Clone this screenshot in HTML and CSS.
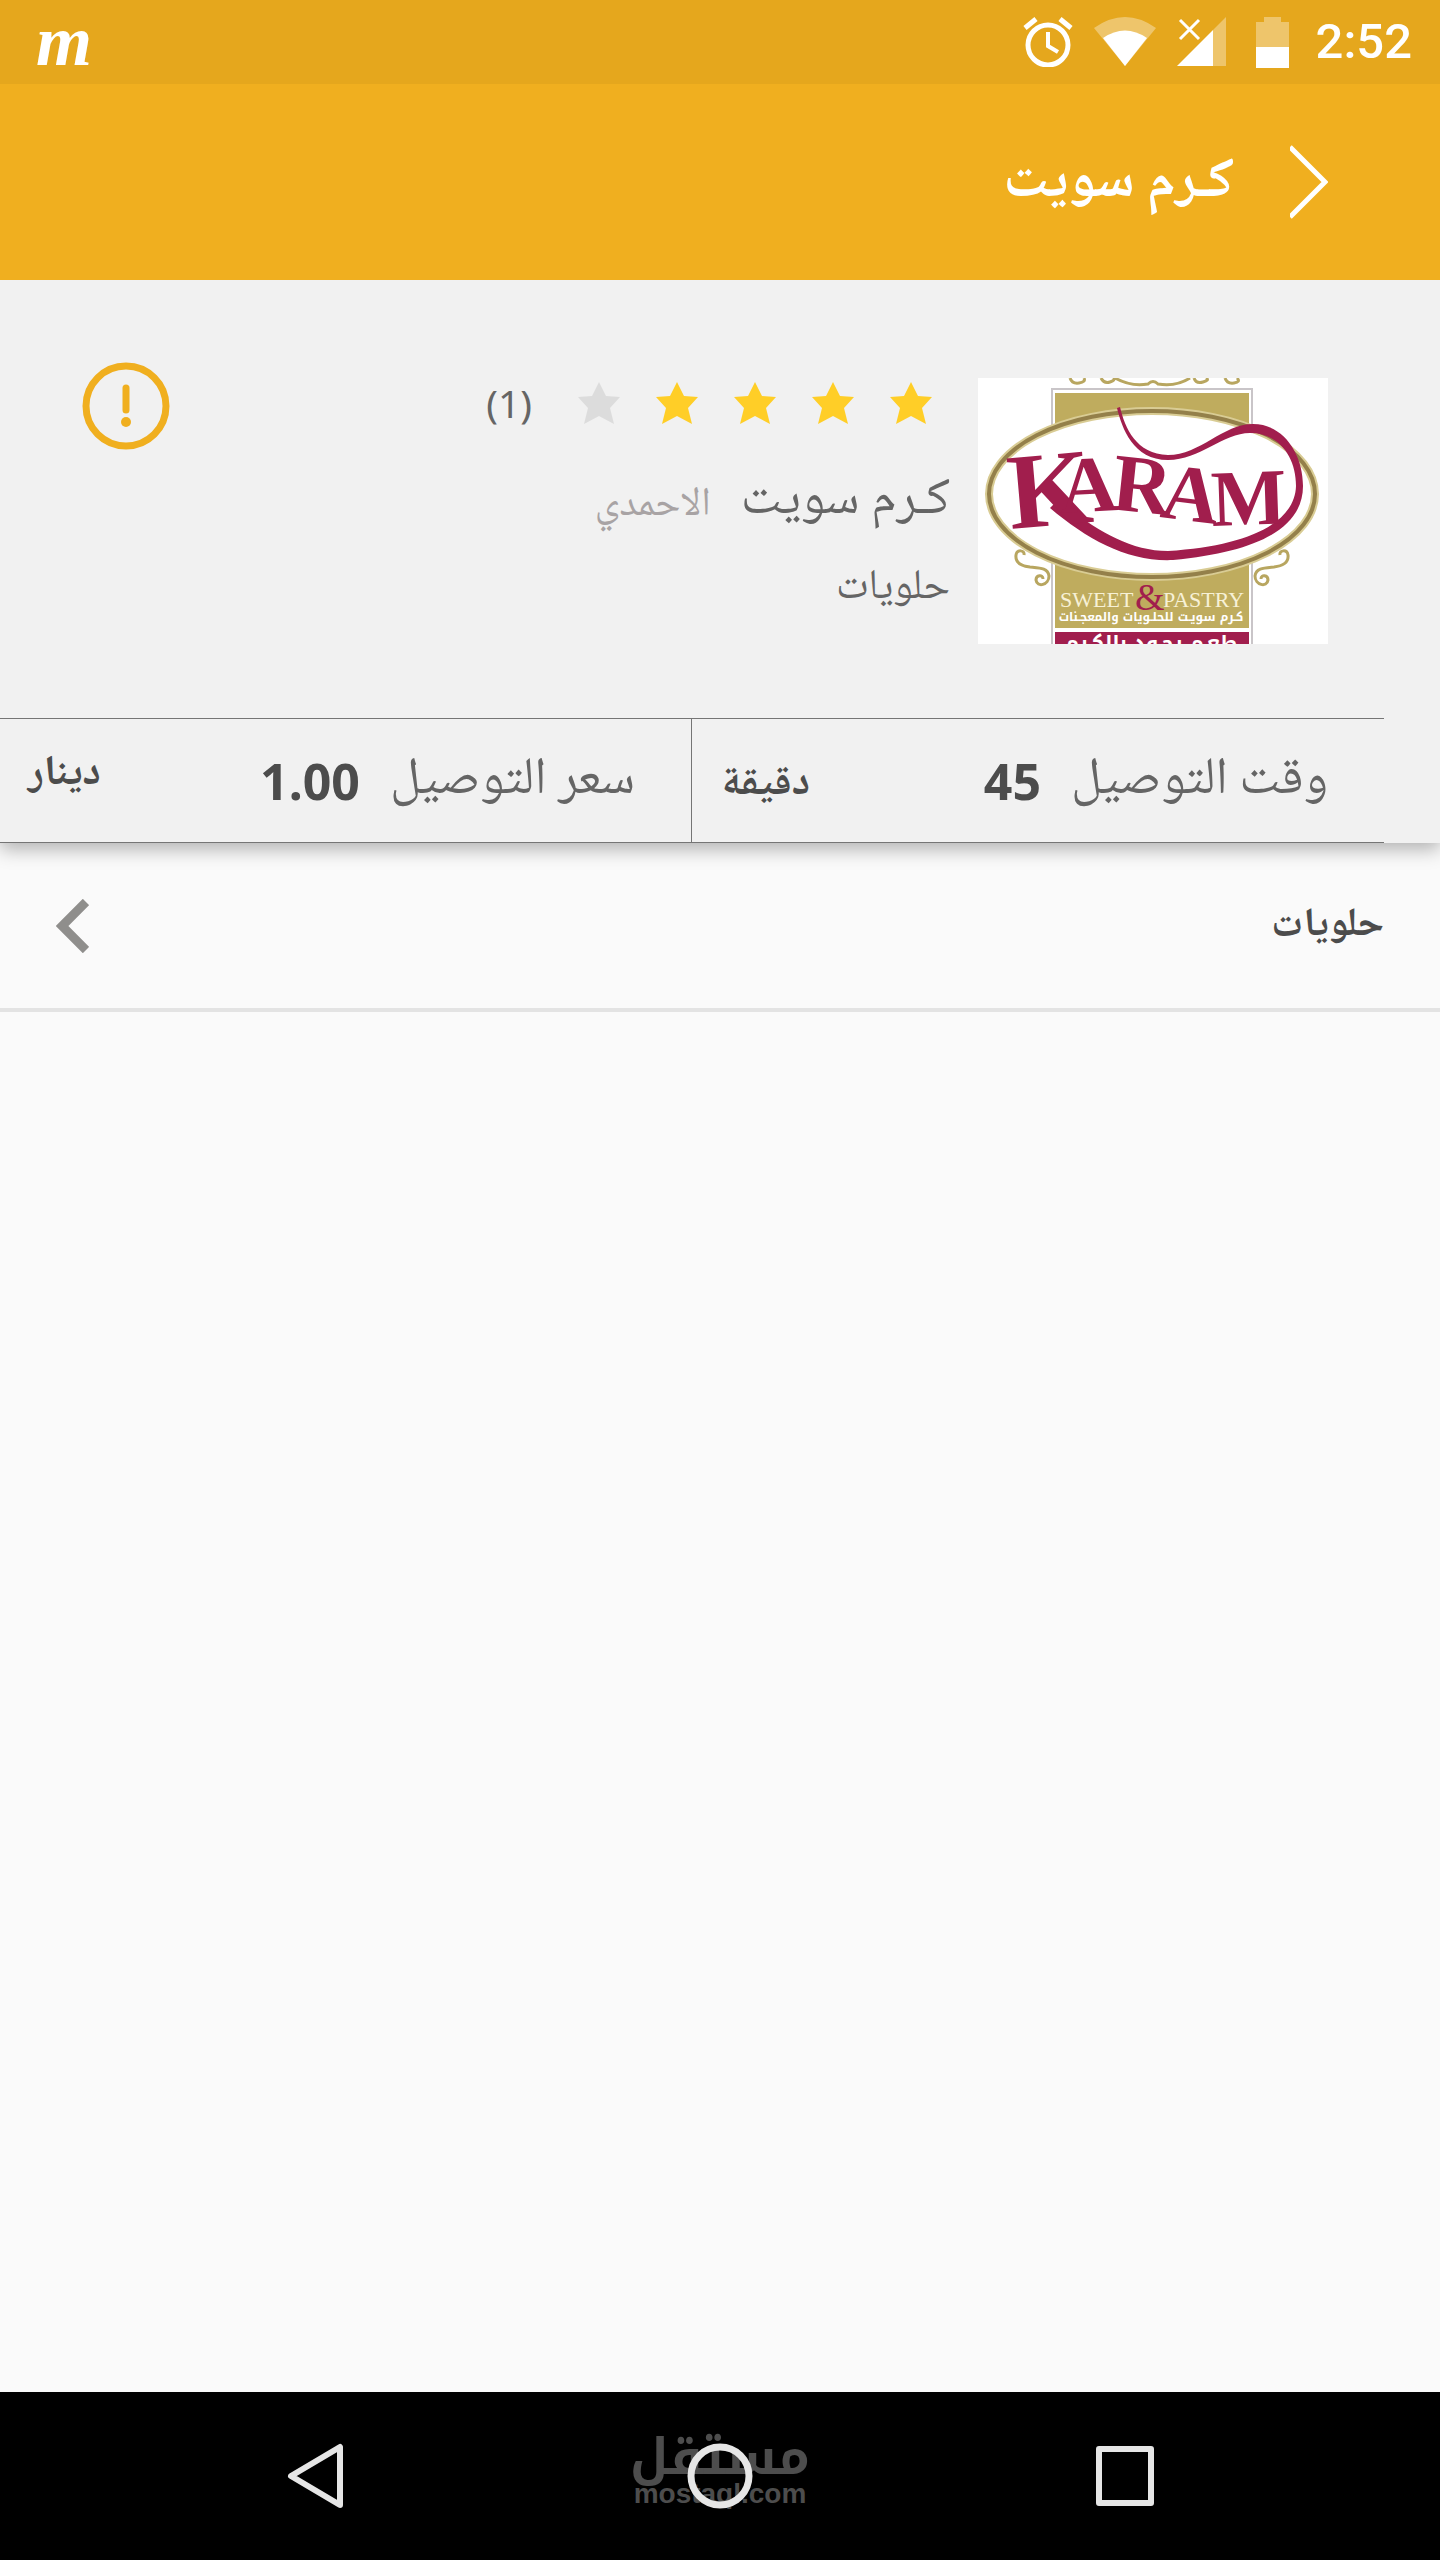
FILE: index.html
```html
<!DOCTYPE html>
<html lang="ar" dir="rtl">
<head>
<meta charset="utf-8">
<meta name="viewport" content="width=device-width, initial-scale=1">
<title>كـرم سويت</title>
<link rel="stylesheet" href="styles.css">
</head>
<body>
<div class="app">
  <div class="statusbar" dir="ltr">
    <span class="statusbar-app">m</span>
    <div class="statusbar-icons">
      <svg width="50" height="50" viewBox="0 0 50 50" fill="none" stroke="#fff" stroke-width="5" aria-label="Alarm">
        <circle cx="25" cy="28" r="20"/>
        <path d="M25 15v14l10 6" stroke-width="4"/>
        <path d="M2 11 13 2M48 11 37 2"/>
      </svg>
      <svg width="62" height="50" viewBox="0 0 62 50" fill="#fff" aria-label="Wi-Fi">
        <path d="M0 11Q31-11 62 11L31 49z" opacity=".35"/>
        <path d="M9 21Q31 6 53 21L31 49z"/>
      </svg>
      <svg width="50" height="50" viewBox="0 0 50 50" fill="#fff" aria-label="Mobile signal">
        <path d="M49 0v49H36V13z" opacity=".35"/>
        <path d="M36 13v36H0z"/>
        <path d="M3 3 22 22M22 3 3 22" fill="none" stroke="#fff" stroke-width="3"/>
      </svg>
      <svg class="battery" width="33" height="51" viewBox="0 0 33 51" fill="#fff" aria-label="Battery">
        <path d="M8 0h17v5h8v25H0V5h8z" opacity=".35"/>
        <path d="M0 30h33v21H0z"/>
      </svg>
      <time class="clock">2:52</time>
    </div>
  </div>

  <header class="appbar">
    <button class="icon-button" type="button" aria-label="رجوع">
      <svg width="38" height="74" viewBox="0 0 38 74" fill="none" stroke="#fff" stroke-width="5">
        <path d="M0 2 35 37 0 72"/>
      </svg>
    </button>
    <h1 class="appbar-title">كـرم سويت</h1>
  </header>

  <main class="content">
    <section class="card">
      <div class="shop">
        <svg class="shop-logo" width="350" height="266" viewBox="0 0 350 266" direction="ltr" aria-label="Karam Sweet &amp; Pastry">
          <rect width="350" height="266" fill="#fff"/>
          <g fill="none" stroke="#b8a660" stroke-width="3">
            <path d="M92 0q2 6 9 5t5-5M123 0q3 6 9 4t3-4M137 0q16 9 33 6 5-5 10 0 18 3 32-6M216 0q2 6 9 4t3-4M247 0q2 6 9 5t3-5"/>
            <path d="M46 177c1-5-7-6-8 0-1 8 6 11 14 12 10 1 18 1 19 9 0 9-12 12-13 4 0-5 7-6 7-1"/>
            <path d="M302 177c-1-5 7-6 8 0 1 8-6 11-14 12-10 1-18 1-19 9 0 9 12 12 13 4 0-5-7-6-7-1"/>
          </g>
          <path d="M74 266V11h200v255" fill="#fff" stroke="#c9c5c8" stroke-width="2"/>
          <rect x="77" y="15" width="194" height="235" fill="#bfac5e"/>
          <rect x="77" y="254" width="194" height="12" fill="#a11e4d"/>
          <ellipse cx="174" cy="116" rx="163" ry="83" fill="#fff" stroke="#d9cc94" stroke-width="8"/>
          <ellipse cx="174" cy="116" rx="163" ry="83" fill="none" stroke="#94804a" stroke-width="4"/>
          <path d="M139 30C144 50 155 82 190 82 222 82 245 55 272 55 300 55 318 78 318 108 317 145 270 168 190 173 150 173 115 150 80 122L72 130C110 162 150 184 195 182 280 174 325 150 325 108 325 75 305 46 275 46 245 46 222 77 190 77 158 76 147 50 142 29z" fill="#a11e4d"/>
          <g class="logo-name">
            <text x="33" y="151" font-size="108" transform="rotate(-5 33 151)">K</text>
            <text x="83" y="135" font-size="80" transform="rotate(-3 83 135)">A</text>
            <text x="132" y="131" font-size="82" transform="rotate(6 132 131)">R</text>
            <text x="181" y="139" font-size="80" transform="rotate(7 181 139)">A</text>
            <text x="234" y="148" font-size="80" transform="rotate(-2 234 148)">M</text>
          </g>
          <g class="logo-tag">
            <text x="82" y="229" font-size="22">SWEET</text>
            <text x="185" y="229" font-size="22">PASTRY</text>
          </g>
          <text class="logo-amp" x="157" y="232" font-size="38">&amp;</text>
          <text class="logo-arabic" x="173" y="243" font-size="12">كـرم سويـت للحلـويات والمعجـنات</text>
          <text class="logo-arabic" x="173" y="272" font-size="20">طعـم يجـود بالكـرم</text>
        </svg>

        <div class="shop-info">
          <div class="rating">
            <svg class="star" viewBox="0 0 42 42"><path d="M21 0l7 14 14 1-10 11 4 16-15-8-15 8 4-16L0 15l14-1z"/></svg>
            <svg class="star" viewBox="0 0 42 42"><path d="M21 0l7 14 14 1-10 11 4 16-15-8-15 8 4-16L0 15l14-1z"/></svg>
            <svg class="star" viewBox="0 0 42 42"><path d="M21 0l7 14 14 1-10 11 4 16-15-8-15 8 4-16L0 15l14-1z"/></svg>
            <svg class="star" viewBox="0 0 42 42"><path d="M21 0l7 14 14 1-10 11 4 16-15-8-15 8 4-16L0 15l14-1z"/></svg>
            <svg class="star star-off" viewBox="0 0 42 42"><path d="M21 0l7 14 14 1-10 11 4 16-15-8-15 8 4-16L0 15l14-1z"/></svg>
            <span class="rating-count">(1)</span>
          </div>
          <div class="shop-title">
            <h2 class="shop-name">كـرم سويت</h2>
            <span class="shop-area">الاحمدي</span>
          </div>
          <p class="shop-kind">حلويات</p>
        </div>

        <button class="icon-button info-button" type="button" aria-label="معلومات">
          <svg width="88" height="88" viewBox="0 0 88 88" fill="none" stroke="#f0af1f" stroke-width="7">
            <circle cx="44" cy="44" r="40"/>
            <path d="M44 26v22" stroke-linecap="round"/>
            <circle cx="44" cy="60" r="5" fill="#f0af1f" stroke="none"/>
          </svg>
        </button>
      </div>

      <div class="delivery">
        <div class="fact">
          <span class="fact-label">وقت التوصيل</span>
          <span class="fact-value">45</span>
          <span class="fact-unit">دقيقة</span>
        </div>
        <div class="fact">
          <span class="fact-label">سعر التوصيل</span>
          <span class="fact-value">1.00</span>
          <span class="fact-unit fact-unit-raised">دينار</span>
        </div>
      </div>
    </section>

    <nav class="menu">
      <a class="menu-item" href="#sweets">
        <span>حلويات</span>
        <svg width="33" height="54" viewBox="0 0 33 54" fill="none" stroke="#8f8e8c" stroke-width="9">
          <path d="M30 3 6 27 30 51"/>
        </svg>
      </a>
    </nav>
  </main>

  <div class="navbar" dir="ltr">
    <div class="watermark">
      <span class="watermark-name" lang="ar">مستقل</span>
      <span class="watermark-site">mostaql.com</span>
    </div>
    <button class="icon-button" type="button" aria-label="Back">
      <svg width="58" height="66" viewBox="0 0 58 66" fill="none" stroke="#e6e6e6" stroke-width="6" stroke-linejoin="round">
        <path d="M54 4v58L5 33z"/>
      </svg>
    </button>
    <button class="icon-button" type="button" aria-label="Home">
      <svg width="66" height="66" viewBox="0 0 66 66" fill="none" stroke="#e6e6e6" stroke-width="7">
        <circle cx="33" cy="33" r="29"/>
      </svg>
    </button>
    <button class="icon-button" type="button" aria-label="Recent apps">
      <svg width="58" height="60" viewBox="0 0 58 60" fill="none" stroke="#e6e6e6" stroke-width="6" stroke-linejoin="round">
        <path d="M3 3h52v54H3z"/>
      </svg>
    </button>
  </div>
</div>
</body>
</html>
```
FILE: styles.css
```css
* { box-sizing: border-box; }

body {
  margin: 0;
  background: #fafafa;
  color: #656565;
  font-family: "Noto Naskh Arabic UI", "Noto Naskh Arabic", "Noto Sans", sans-serif;
}

h1, h2, p { margin: 0; font-weight: 400; }
svg { display: block; flex: none; }

.app {
  display: flex;
  flex-direction: column;
  min-height: 100vh;
}

.icon-button {
  display: block;
  padding: 0;
  border: 0;
  background: none;
}

/* Status bar */
.statusbar {
  display: flex;
  justify-content: space-between;
  height: 84px;
  padding: 0 28px 0 36px;
  background: #e5a71d;
  color: #fff;
}
.statusbar-app {
  font: italic 700 72px/82px "Liberation Serif", serif;
}
.statusbar-icons {
  display: flex;
  align-items: center;
  gap: 21px;
}
.battery { margin-left: 8px; }
.clock {
  font: 500 49px/88px Roboto, sans-serif;
  margin-left: 6px;
}

/* Title bar */
.appbar {
  position: relative;
  z-index: 1;
  display: flex;
  align-items: center;
  gap: 56px;
  height: 196px;
  padding: 0 112px;
  background: #f0af1f;
  color: #fff;
}
.appbar-title {
  font-size: 56px;
  font-weight: 700;
  line-height: 80px;
}

.content { flex: 1; }

/* Shop card */
.card {
  background: #f1f1f1;
  box-shadow: 0 6px 18px rgba(0, 0, 0, .3);
}
.shop {
  display: flex;
  align-items: flex-start;
  padding: 82px 112px 74px 82px;
}
.shop-logo { margin-top: 16px; }
.logo-name, .logo-amp {
  fill: #a11e4d;
  font-family: "Liberation Serif", serif;
  font-weight: 700;
}
.logo-amp { font-weight: 400; }
.logo-tag {
  fill: #f7f1d6;
  font-family: "Liberation Serif", serif;
}
.logo-arabic {
  fill: #fff;
  font-family: "Noto Kufi Arabic", sans-serif;
  font-weight: 700;
  text-anchor: middle;
}
.shop-info {
  flex: 1;
  padding-right: 28px;
}
.rating {
  display: flex;
  align-items: center;
  gap: 36px;
  height: 82px;
  padding-right: 18px;
}
.star {
  width: 42px;
  height: 42px;
  fill: #ffce27;
}
.star-off { fill: #dcdcdc; }
.rating-count {
  margin-right: 10px;
  font: 400 39px/80px "Noto Sans", sans-serif;
}
.shop-title {
  display: flex;
  align-items: baseline;
  gap: 30px;
  padding-top: 8px;
  line-height: 96px;
}
.shop-name { font-size: 52px; }
.shop-area {
  color: #a8a3a4;
  font-size: 40px;
}
.shop-kind {
  font-size: 42px;
  line-height: 70px;
}

/* Delivery facts */
.delivery {
  display: grid;
  grid-template-columns: 1fr 1fr;
  margin-right: 56px;
  border: solid #757575;
  border-width: 1px 0;
}
.fact {
  display: flex;
  align-items: baseline;
  height: 123px;
  padding: 0 56px 0 28px;
  line-height: 122px;
}
.fact + .fact { border-right: 1px solid #757575; }
.fact-label { font-size: 52px; }
.fact-value {
  margin-right: 30px;
  color: #4c4c4c;
  font: 700 50px/122px "Noto Sans", sans-serif;
}
.fact-unit {
  margin-right: auto;
  color: #4c4c4c;
  font-size: 42px;
  font-weight: 700;
}
.fact-unit-raised { line-height: 110px; align-self: flex-start; }

/* Menu list */
.menu-item {
  display: flex;
  align-items: center;
  justify-content: space-between;
  height: 169px;
  padding: 0 56px;
  border-bottom: 4px solid #e3e3e3;
  color: #4c4c4c;
  font-size: 40px;
  font-weight: 700;
  text-decoration: none;
}

/* System navigation */
.navbar {
  position: relative;
  display: flex;
  align-items: center;
  justify-content: space-between;
  height: 168px;
  padding: 0 286px;
  background: #000;
}
.watermark {
  position: absolute;
  inset: 0;
  display: flex;
  flex-direction: column;
  align-items: center;
  padding-top: 38px;
  color: #4d4d4d;
}
.watermark-name {
  font: 700 50px/56px "Noto Kufi Arabic", sans-serif;
}
.watermark-site {
  font: 700 28px/16px "Liberation Sans", sans-serif;
}
.navbar .icon-button { position: relative; }
```
